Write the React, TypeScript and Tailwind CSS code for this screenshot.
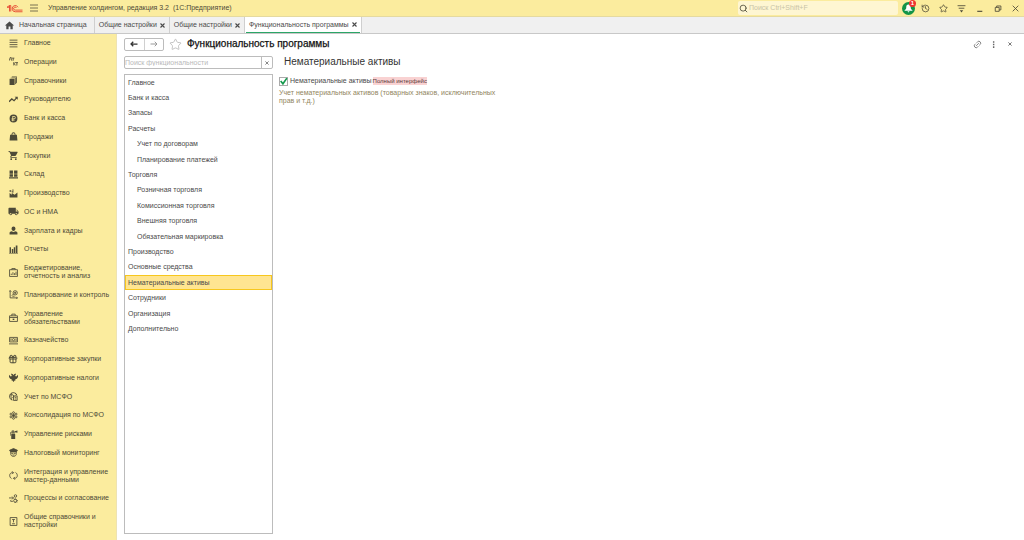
import React, { useState } from "react";
import { MdHome, MdLocalShipping, MdShoppingCart } from "react-icons/md";
import { Gift, History, Link2, Search, Star } from "lucide-react";

type IconProps = { children: React.ReactNode; className?: string };

const Solid = ({ children, className = "size-[9px]" }: IconProps) => (
  <svg viewBox="0 0 16 16" className={className} fill="currentColor" aria-hidden="true">
    {children}
  </svg>
);

const Line = ({ children, className = "size-[9px]" }: IconProps) => (
  <svg viewBox="0 0 16 16" className={className} fill="none" stroke="currentColor" strokeWidth="1.5" aria-hidden="true">
    {children}
  </svg>
);

const sections: { label: string; icon: React.ReactNode }[] = [
  { label: "Главное", icon: <Line><path d="M1 2h14M1 6h14M1 10h14M1 14h14" /></Line> },
  {
    label: "Операции",
    icon: (
      <Line>
        <path d="M0 6.500V5h1l1-4h2v4h1v1.500M5.500 2h4M7.500 2v4.500M8.500 9v6M12 9l-3 3 3 3M12 10h4M14 10v5" />
      </Line>
    ),
  },
  {
    label: "Справочники",
    icon: <Solid><path d="M1 5h9v11H1z" /><path d="M3 3h9v11h-1V4H3zM5 1h9v11h-1V2H5z" /><path d="M12 4l2-2v10l-3 3z" opacity=".7" /></Solid>,
  },
  {
    label: "Руководителю",
    icon: <Line><path d="M0 12l5-5 4 3 4.500-5" strokeWidth="2.200" /><path d="M10 3h5.500v5.500z" fill="currentColor" stroke="none" /></Line>,
  },
  {
    label: "Банк и касса",
    icon: (
      <Solid>
        <path fillRule="evenodd" d="M8 1a7 7 0 1 1 0 14A7 7 0 0 1 8 1ZM6 3.500V8H4.500v1.200H6v1H4.500v1.200H6V13h1.400v-1.600H10v-1.200H7.400v-1H9a2.850 2.850 0 0 0 0-5.700Zm1.400 1.300H9a1.600 1.600 0 0 1 0 3.200H7.400Z" />
      </Solid>
    ),
  },
  {
    label: "Продажи",
    icon: <Solid><path fillRule="evenodd" d="M2 5h2.500V4a3.500 3.500 0 0 1 7 0v1H14l1 10H1zm4 0h4V4a2 2 0 0 0-4 0z" /></Solid>,
  },
  { label: "Покупки", icon: <MdShoppingCart className="size-[11px]" /> },
  {
    label: "Склад",
    icon: <Solid><path d="M1 1h6v5.500H1zM9 1h6v5.500H9zM1 7.500h6V12H1zM9 7.500h6V12H9zM0 13h16v2H0z" /></Solid>,
  },
  {
    label: "Производство",
    icon: <Solid><path d="M1 15V7l4 3V7l5 3 5-4v9zM1 2h3v3H1zM5 4h3v2H5zM6 1h2v2H6z" /></Solid>,
  },
  { label: "ОС и НМА", icon: <MdLocalShipping className="size-[11px]" /> },
  {
    label: "Зарплата и кадры",
    icon: <Solid><path d="M8 1a3.500 3.500 0 0 1 3.500 3.500C11.500 7 10 9 8 9S4.500 7 4.500 4.500A3.500 3.500 0 0 1 8 1ZM1 15v-3c0-1 2-2 4-2.500 2 1.500 4 1.500 6 0 2 .5 4 1.500 4 2.500v3z" /></Solid>,
  },
  { label: "Отчеты", icon: <Solid><path d="M1 4h2.500v10H1zM5 7h2.500v7H5zM12 1h3v13h-3zM8.500 4H11v10H8.500zM0 14h16v1H0z" /></Solid> },
  {
    label: "Бюджетирование,\nотчетность и анализ",
    icon: <Line><path d="M1 3h14v12H1zM5 3V1h6v2M4 12.500V10M7 12.500V7.500M10 12.500V9M12.500 12.500V6.500" /></Line>,
  },
  {
    label: "Планирование и контроль",
    icon: (
      <Line>
        <path d="M2 1v13h13M0 3l2-2 2 2M13 12l2 2-2 2M5 10l3-3" />
        <circle cx="11" cy="5" r="3.800" /><circle cx="11" cy="5" r="1.200" fill="currentColor" /><path d="M6 11h4" />
      </Line>
    ),
  },
  {
    label: "Управление\nобязательствами",
    icon: <Line><path d="M1 5h14v10H1zM5 5V2h6v3M1 8h14" /><path d="M6.500 10h3v2.500h-3z" fill="currentColor" stroke="none" /></Line>,
  },
  {
    label: "Казначейство",
    icon: <Line><path d="M1 2.500h14v8H1zM0 14h16M3.500 4v5M12.500 4v5" /><circle cx="8" cy="6.500" r="2" /></Line>,
  },
  { label: "Корпоративные закупки", icon: <Gift className="size-[10px]" strokeWidth={2.4} /> },
  {
    label: "Корпоративные налоги",
    icon: <Solid><path d="M4 1l3 1 1 2 1-2 3-1v3l-2 1 3 1 3-3v4l-2 3-3 1 1 2-2 .5L8 16l-2-2.500L4 13l1-2-3-1-2-3V3l3 3 3-1-2-1z" /></Solid>,
  },
  {
    label: "Учет по МСФО",
    icon: (
      <Line>
        <path d="M6 14.500A6.800 6.800 0 1 1 14 5.500M5 1.800C3 5 3 10 5 14M2 5h5l2 3-3 2" />
        <path d="M8 7h6.500v8H8z" /><path d="M10 9.500h3M10 12.500h3M11 2l2 2-1 2" />
      </Line>
    ),
  },
  {
    label: "Консолидация по МСФО",
    icon: (
      <Line>
        <circle cx="8" cy="8" r="2" fill="currentColor" />
        <circle cx="8" cy="3" r="1.700" /><circle cx="8" cy="13" r="1.700" />
        <circle cx="3.500" cy="5.500" r="1.700" /><circle cx="12.500" cy="5.500" r="1.700" />
        <circle cx="3.500" cy="10.500" r="1.700" /><circle cx="12.500" cy="10.500" r="1.700" />
      </Line>
    ),
  },
  {
    label: "Управление рисками",
    icon: <Solid><path d="M5 3h5v2H5zM5 6h4c1.500 0 2 1 2 2v8H4V8c0-1 0-2 1-2ZM5 1h4v1.500H5zM10 2l5-1v4l-5-1zM2 5l3-3v1.500L3 6v4H2z" /></Solid>,
  },
  {
    label: "Налоговый мониторинг",
    icon: (
      <Line>
        <path d="M1 4l7-3 7 3-2 3H3z" fill="currentColor" />
        <path d="M3 7v3c0 3 2 5 5 5s5-2 5-5V7M4 9.500h3.500M8.500 9.500H12M6 12.500h4" />
      </Line>
    ),
  },
  {
    label: "Интеграция и управление\nмастер-данными",
    icon: <Line><path d="M4.500 13.500C0 11 0 3.500 5.500 3H8M11.500 2.500C16 5 16 12.500 10.500 13H8M5.500 .5 8 3 5.500 5.500M10.500 10.500 8 13l2.500 2.500" /></Line>,
  },
  {
    label: "Процессы и согласование",
    icon: (
      <Line>
        <circle cx="11.500" cy="3.500" r="2.200" /><circle cx="11" cy="12" r="2.700" />
        <path d="M0 7h8M5.500 4.500 8 7 5.500 9.500M3 11v2h4M11 7.500v2M11 14.500V16M14 12h2M13 10l1-1M13 14l1 1" />
      </Line>
    ),
  },
  {
    label: "Общие справочники и\nнастройки",
    icon: <Line><path d="M2 1h12v14H2z" /><path d="M5.500 4.500h5M8 4.500v5M5.500 12h5" /></Line>,
  },
];

const features: { label: string; nested?: boolean }[] = [
  { label: "Главное" },
  { label: "Банк и касса" },
  { label: "Запасы" },
  { label: "Расчеты" },
  { label: "Учет по договорам", nested: true },
  { label: "Планирование платежей", nested: true },
  { label: "Торговля" },
  { label: "Розничная торговля", nested: true },
  { label: "Комиссионная торговля", nested: true },
  { label: "Внешняя торговля", nested: true },
  { label: "Обязательная маркировка", nested: true },
  { label: "Производство" },
  { label: "Основные средства" },
  { label: "Нематериальные активы" },
  { label: "Сотрудники" },
  { label: "Организация" },
  { label: "Дополнительно" },
];

const Cross = ({ className = "size-[5px]" }: { className?: string }) => (
  <svg viewBox="0 0 10 10" className={className} fill="none" stroke="currentColor" strokeWidth="2.2" aria-hidden="true">
    <path d="M1 1l8 8M9 1 1 9" />
  </svg>
);

function TitleBar() {
  return (
    <header className="flex h-[17px] shrink-0 items-center border-b border-[#e5daa0] bg-[#fbec9e] pr-1 pl-[7px] text-[#4d4a38]">
      <svg viewBox="0 0 32 18" className="h-[9px] w-4 shrink-0" fill="none" stroke="#e5432f" strokeWidth="1.8" role="img" aria-label="1С">
        <path d="M0 6.500 5 3v12M5 3h2.500v12M0 6.500h5" />
        <path d="M22 6.500A6.200 6.200 0 1 0 16.500 15.500H31" />
        <path d="M19 8A3 3 0 1 0 16.500 12.200H31" />
      </svg>
      <button aria-label="Меню" className="ml-[7px]">
        <Line className="size-[8px]"><path d="M0 2h16M0 8h16M0 14h16" /></Line>
      </button>
      <span className="ml-[10px] whitespace-pre">{"Управление холдингом, редакция 3.2  (1С:Предприятие)"}</span>
      <label className="ml-auto flex h-[14px] w-40 items-center gap-px rounded-xs bg-[#fef6d2] pl-px">
        <Search className="size-[9px] shrink-0" strokeWidth={2.2} />
        <input aria-label="Поиск" placeholder="Поиск Ctrl+Shift+F" className="w-full min-w-0 bg-transparent outline-none placeholder:text-[#c9c3a6]" />
      </label>
      <button aria-label="Уведомления" className="relative ml-1 size-[13px] rounded-full bg-[#129447] text-white">
        <Solid className="mx-auto size-[9px]"><path d="M8 1c3 0 4 2 4 5 0 2.500 1 3.500 3 5v1H1v-1c2-1.500 3-2.500 3-5 0-3 1-5 4-5ZM6 13h4l-2 2z" /></Solid>
        <span className="absolute -top-[2px] -right-[1px] flex size-[7px] items-center justify-center rounded-full bg-[#f0342f] text-[6px] leading-none font-bold">1</span>
      </button>
      <div className="ml-[6px] flex items-center gap-[9px]">
        <button aria-label="История"><History className="size-[9px]" /></button>
        <button aria-label="Избранное"><Star className="size-[9px]" /></button>
        <button aria-label="Настройки"><Line className="size-[9px]"><path d="M1 3h14M3 7.500h10" /><path d="M5 11h6l-3 4z" fill="currentColor" stroke="none" /></Line></button>
        <button aria-label="Свернуть"><Line className="size-[9px]"><path d="M4 13h9" strokeWidth="2" /></Line></button>
        <button aria-label="Развернуть"><Line className="size-[9px]"><path d="M4 6h7v7H4zM6.500 6V3.500H14v7h-3" /></Line></button>
        <button aria-label="Закрыть"><Line className="size-[9px]"><path d="M3 3l10 10M13 3 3 13" /></Line></button>
      </div>
    </header>
  );
}

function Tab({ label, active = false }: { label: string; active?: boolean }) {
  return (
    <div className={active ? "flex border-x border-[#cfcfcf] bg-white px-px" : "flex border-l border-[#cfcfcf] px-1"}>
      <div className={active ? "flex items-center gap-[3px] border-b border-[#2ba667] px-[3px]" : "flex items-center gap-[3px]"}>
        <button>{label}</button>
        <button aria-label={"Закрыть: " + label}><Cross /></button>
      </div>
    </div>
  );
}

function Tabs() {
  return (
    <div className="flex h-[17px] shrink-0 border-b border-[#c8c8c8] bg-[#f0f0f0] text-[#4a4a4a]">
      <button className="flex items-center gap-1 pr-[7px] pl-1">
        <MdHome className="size-[11px]" />
        Начальная страница
      </button>
      <Tab label="Общие настройки" />
      <Tab label="Общие настройки" />
      <Tab label="Функциональность программы" active />
    </div>
  );
}

function Sidebar() {
  return (
    <nav className="flex w-[117px] shrink-0 flex-col justify-between border-r border-[#eee3b3] bg-[#fbec9e] pt-[5px] pb-[11px] text-[#4d4a38]">
      {sections.map((s) => (
        <a key={s.label} href="#" className="flex items-center">
          <span className="-my-1 flex w-6 shrink-0 justify-center pl-[2px]">{s.icon}</span>
          <span className="leading-[8px] whitespace-pre">{s.label}</span>
        </a>
      ))}
    </nav>
  );
}

function FeatureList() {
  const [selected, setSelected] = useState("Нематериальные активы");
  return (
    <div className="flex w-[149px] shrink-0 flex-col">
      <div className="flex h-[13px] rounded-xs border border-[#bcbcbc]">
        <input aria-label="Поиск функциональности" placeholder="Поиск функциональности" className="min-w-0 flex-1 outline-none placeholder:text-[#b9b9b9]" />
        <button aria-label="Очистить" className="flex w-[11px] items-center justify-center border-l border-[#bcbcbc] text-[#777]">
          <Cross className="size-[4px]" />
        </button>
      </div>
      <div className="mt-[5px] flex-1 border border-[#bcbcbc]">
        <ul className="flex h-4/7 flex-col">
          {features.map((f) => (
            <li
              key={f.label}
              className={f.label === selected ? "flex flex-1 bg-[#f7c71e] p-px" : "flex flex-1 p-px"}
            >
              <button
                onClick={() => setSelected(f.label)}
                className={
                  (f.nested ? "pl-[11px] " : "pl-[2px] ") +
                  (f.label === selected ? "bg-[#ffe591] " : "") +
                  "w-full text-left"
                }
              >
                {f.label}
              </button>
            </li>
          ))}
        </ul>
      </div>
    </div>
  );
}

export default function App() {
  const [enabled, setEnabled] = useState(true);
  return (
    <div className="flex h-screen flex-col overflow-hidden bg-white font-['Liberation_Sans',Arial,sans-serif] text-[7px] leading-[8px] text-[#4a4a4a]">
      <TitleBar />
      <Tabs />
      <div className="flex min-h-0 flex-1">
        <Sidebar />
        <main className="flex min-w-0 flex-1 flex-col pt-[3px] pr-[10px] pb-[6px] pl-[7px]">
          <div className="flex h-[14px] shrink-0 items-center">
            <div className="flex h-[13px] w-10 rounded-xs border border-[#bcbcbc]">
              <button aria-label="Назад" className="flex flex-1 items-center justify-center text-[#333]">
                <Line className="size-[8px]"><path d="M15 8H2M6.500 3.500 2 8l4.500 4.500" strokeWidth="2.500" /></Line>
              </button>
              <button aria-label="Вперед" className="flex flex-1 items-center justify-center border-l border-[#d0d0d0] text-[#999]">
                <Line className="size-[8px]"><path d="M1 8h13M9.500 3.500 14 8l-4.500 4.500" strokeWidth="2" /></Line>
              </button>
            </div>
            <button aria-label="В избранное" className="ml-[5px] text-[#b5b5b5]"><Star className="size-[13px]" strokeWidth={1.5} /></button>
            <h1 className="ml-[5px] text-[10px] leading-3 text-[#111] [-webkit-text-stroke:0.25px_#111]">Функциональность программы</h1>
            <div className="ml-auto flex items-center gap-[7px] text-[#666]">
              <button aria-label="Ссылка"><Link2 className="size-[9px] -rotate-45" /></button>
              <button aria-label="Еще"><Solid className="size-[9px]"><path d="M7 2h2.500v3H7zM7 6.500h2.500v3H7zM7 11h2.500v3H7z" /></Solid></button>
              <button aria-label="Закрыть форму" className="flex w-[9px] justify-center"><Cross className="size-[4px]" /></button>
            </div>
          </div>
          <div className="mt-[5px] flex min-h-0 flex-1 gap-[6px]">
            <FeatureList />
            <section className="min-w-0 flex-1">
              <h2 className="pl-[5px] text-[10px] leading-3 text-[#333]">Нематериальные активы</h2>
              <div className="mt-2 flex h-[10px] items-center">
                <label className="flex items-center gap-[2px]">
                  <span className="relative flex size-[9px]">
                    <input
                      type="checkbox"
                      checked={enabled}
                      onChange={(e) => setEnabled(e.target.checked)}
                      className="size-[9px] appearance-none border border-[#aaa] bg-white"
                    />
                    {enabled && (
                      <svg viewBox="0 0 16 16" className="pointer-events-none absolute inset-0 size-[9px]" fill="none" stroke="#159a4e" strokeWidth="3" aria-hidden="true">
                        <path d="M3 7l4 5 7-10" />
                      </svg>
                    )}
                  </span>
                  Нематериальные активы
                </label>
                <span className="ml-px bg-[#f9d2d2] text-[6px] text-[#5a3a3a]">Полный интерфейс</span>
              </div>
              <p className="mt-[3px] max-w-[220px] text-[#918560]">
                Учет нематериальных активов (товарных знаков, исключительных прав и т.д.)
              </p>
            </section>
          </div>
        </main>
      </div>
    </div>
  );
}
